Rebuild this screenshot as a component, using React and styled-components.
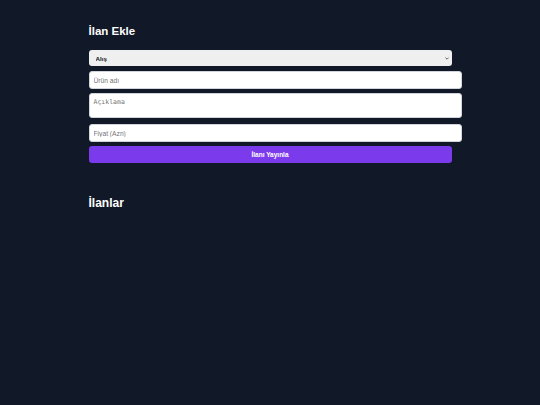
import React, { useState } from "react";
import styled, { createGlobalStyle } from "styled-components";

const GlobalStyle = createGlobalStyle`
  html, body {
    margin: 0;
    padding: 0;
    background-color: #111827;
  }
  body {
    font-family: "Liberation Sans", Arial, sans-serif;
    color: #ffffff;
  }
`;

export default function App() {
  const [type, setType] = useState("alis");
  const [name, setName] = useState("");
  const [desc, setDesc] = useState("");
  const [price, setPrice] = useState("");

  const handleSubmit = (e) => {
    e.preventDefault();
  };

  return (
    <>
      <GlobalStyle />
      <Page>
        <Container>
          <Title>İlan Ekle</Title>
          <Form onSubmit={handleSubmit}>
            <SelectWrap>
              <Select value={type} onChange={(e) => setType(e.target.value)}>
                <option value="alis">Alış</option>
                <option value="satis">Satış</option>
              </Select>
              <Chevron width="4" height="3" viewBox="0 0 4 3">
                <path d="M0.4 0.6 L2 2.2 L3.6 0.6" fill="none" stroke="#555" strokeWidth="0.9" />
              </Chevron>
            </SelectWrap>
            <Input
              type="text"
              placeholder="Ürün adı"
              value={name}
              onChange={(e) => setName(e.target.value)}
            />
            <TextArea
              placeholder="Açıklama"
              value={desc}
              onChange={(e) => setDesc(e.target.value)}
            />
            <Input
              type="number"
              placeholder="Fiyat (Azn)"
              value={price}
              onChange={(e) => setPrice(e.target.value)}
            />
            <Button type="submit">İlanı Yayınla</Button>
          </Form>
          <ListTitle>İlanlar</ListTitle>
        </Container>
      </Page>
    </>
  );
}

const Page = styled.div`
  min-height: 405px;
  background-color: #111827;
  padding-top: 23px;
  box-sizing: border-box;
`;

const Container = styled.div`
  width: 363px;
  margin: 0 auto;
`;

const Title = styled.h2`
  margin: 0 0 11px;
  font-size: 11.5px;
  line-height: 16px;
  font-weight: bold;
  color: #ffffff;
`;

const Form = styled.form`
  display: flex;
  flex-direction: column;
  align-items: flex-start;
`;

const SelectWrap = styled.div`
  position: relative;
  width: 100%;
  height: 16px;
  margin: 0 0 5px;
`;

const Select = styled.select`
  appearance: none;
  -webkit-appearance: none;
  display: block;
  width: 100%;
  height: 16px;
  margin: 0;
  padding: 0 0 0 7px;
  border: none;
  border-radius: 3px;
  background-color: #efefef;
  color: #111111;
  font-family: "Liberation Sans", Arial, sans-serif;
  font-size: 6.2px;
  font-weight: bold;
  outline: none;
`;

const Chevron = styled.svg`
  position: absolute;
  right: 3px;
  top: 7px;
  pointer-events: none;
`;

const fieldBase = `
  width: 100%;
  padding: 0 4px;
  border: 1px solid #d1d5db;
  border-radius: 3px;
  background-color: #ffffff;
  color: #111111;
  outline: none;
  box-sizing: content-box;
`;

const Input = styled.input`
  ${fieldBase}
  height: 16px;
  margin: 0 0 4px;
  font-family: "Liberation Sans", Arial, sans-serif;
  font-size: 6.7px;
  -moz-appearance: textfield;
  &::-webkit-outer-spin-button,
  &::-webkit-inner-spin-button {
    -webkit-appearance: none;
    margin: 0;
  }
  &::placeholder {
    color: #757575;
  }
`;

const TextArea = styled.textarea`
  ${fieldBase}
  display: block;
  height: 19px;
  padding-top: 4px;
  margin: 0 0 6px;
  resize: none;
  font-family: "DejaVu Sans Mono", "Liberation Mono", monospace;
  font-size: 6.5px;
  line-height: 8px;
  &::placeholder {
    color: #757575;
  }
`;

const Button = styled.button`
  width: 100%;
  height: 17px;
  padding: 0;
  border: none;
  border-radius: 3px;
  background-color: #7c3aed;
  color: #ffffff;
  font-family: "Liberation Sans", Arial, sans-serif;
  font-size: 6.5px;
  font-weight: bold;
  cursor: pointer;
`;

const ListTitle = styled.h2`
  margin: 32px 0 0;
  font-size: 12px;
  line-height: 16px;
  font-weight: bold;
  color: #ffffff;
`;
